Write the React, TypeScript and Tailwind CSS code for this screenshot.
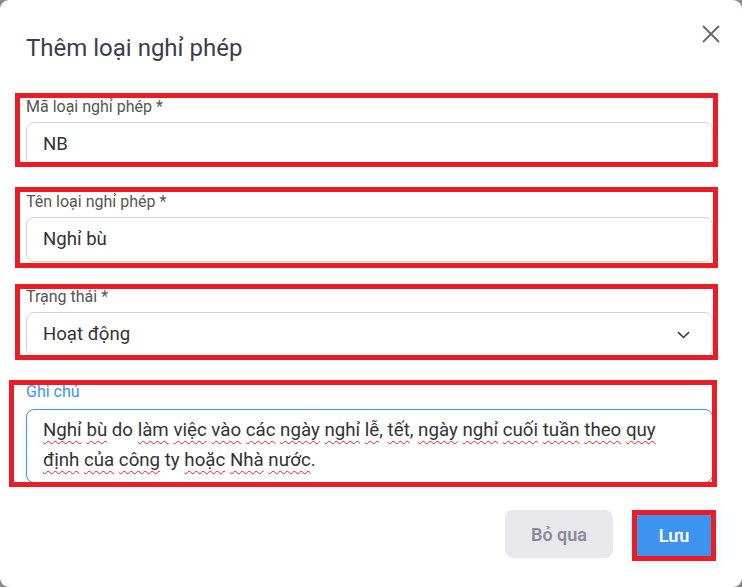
import React from 'react'

const RED_BOX = 'pointer-events-none absolute border-[5px] border-[#ec1c24]'

const Squiggle: React.FC<{children: React.ReactNode}> = ({children}) => (
  <span className="underline decoration-wavy decoration-[#e5212b] decoration-1 underline-offset-[4px] [text-decoration-skip-ink:none]">
    {children}
  </span>
)

const App: React.FC = () => {
  return (
    <div className="h-[587px] w-[742px] bg-[#8a8a8a] font-['Roboto',sans-serif]">
      <div className="relative h-full w-full rounded-[9px] bg-white pl-[26px] pr-[29px] pt-[32px]">
        <button className="absolute right-[22px] top-[25px] text-[#6b6b6b]">
          <svg width="18" height="18" viewBox="0 0 18 18" fill="none" stroke="currentColor" strokeWidth="2">
            <path d="M1 1L17 17M17 1L1 17" />
          </svg>
        </button>

        <h2 className="text-[24px] leading-[32px] text-[#3c3c4c]">Thêm loại nghỉ phép</h2>

        <div className="mt-[33px] flex flex-col gap-[25px]">
          <div className="relative">
            <label className="block text-[16px] leading-[20px] text-[#555]">Mã loại nghỉ phép *</label>
            <div className="mt-[5px] flex h-[45px] items-center rounded-[8px] border border-[#d4d4d4] pl-4 text-[18.6px] text-[#333]">
              NB
            </div>
            <div className={`${RED_BOX} -left-[11px] -top-[4px] h-[74px] w-[703px]`} />
          </div>

          <div className="relative">
            <label className="block text-[16px] leading-[20px] text-[#555]">Tên loại nghỉ phép *</label>
            <div className="mt-[5px] flex h-[45px] items-center rounded-[8px] border border-[#d4d4d4] pl-4 text-[18.6px] text-[#333]">
              Nghỉ bù
            </div>
            <div className={`${RED_BOX} -left-[11px] -top-[5px] h-[81px] w-[703px]`} />
          </div>

          <div className="relative">
            <label className="block text-[16px] leading-[20px] text-[#555]">Trạng thái *</label>
            <div className="mt-[5px] flex h-[45px] items-center justify-between rounded-[8px] border border-[#d4d4d4] pl-4 pr-[22px] text-[18.6px] text-[#333]">
              <span>Hoạt động</span>
              <svg width="13" height="8" viewBox="0 0 13 8" fill="none" stroke="#3a3a44" strokeWidth="1.6">
                <path d="M1 1.2L6.5 6.5L12 1.2" />
              </svg>
            </div>
            <div className={`${RED_BOX} -left-[11px] -top-[3px] h-[76px] w-[703px]`} />
          </div>

          <div className="relative">
            <label className="block text-[16px] leading-[20px] text-[#3d93f0]">Ghi chú</label>
            <div className="mt-[7px] h-[74px] rounded-[8px] border border-[#3d93f0] pl-4 pr-4 pt-[5px] text-[18.7px] leading-[30px] text-[#333] shadow-[0_3px_8px_rgba(61,147,240,0.12)]">
              <Squiggle>Nghỉ</Squiggle> <Squiggle>bù</Squiggle> do <Squiggle>làm</Squiggle>{' '}
              <Squiggle>việc</Squiggle> <Squiggle>vào</Squiggle> <Squiggle>các</Squiggle>{' '}
              <Squiggle>ngày</Squiggle> <Squiggle>nghỉ</Squiggle> <Squiggle>lễ</Squiggle>,{' '}
              <Squiggle>tết</Squiggle>, <Squiggle>ngày</Squiggle> <Squiggle>nghỉ</Squiggle>{' '}
              <Squiggle>cuối</Squiggle> <Squiggle>tuần</Squiggle> <Squiggle>theo</Squiggle>{' '}
              <Squiggle>quy</Squiggle>
              <br />
              <Squiggle>định</Squiggle> <Squiggle>của</Squiggle> <Squiggle>công</Squiggle> ty{' '}
              <Squiggle>hoặc</Squiggle> <Squiggle>Nhà</Squiggle> <Squiggle>nước</Squiggle>.
            </div>
            <div className={`${RED_BOX} -left-[17px] -top-[2px] h-[107px] w-[708px]`} />
          </div>
        </div>

        <div className="-mr-[3px] mt-[27px] flex items-start justify-end gap-[19px]">
          <button className="h-[48px] w-[108px] rounded-[8px] bg-[#e9e9ed] text-[18px] font-semibold text-[#8b8b96]">
            Bỏ qua
          </button>
          <button className="h-[51px] w-[84px] border-[5px] border-[#ec1c24] bg-[#3d93f0] text-[18px] font-semibold text-white shadow-[0_2px_10px_rgba(61,147,240,0.15)]">
            Lưu
          </button>
        </div>
      </div>
    </div>
  )
}

export default App
